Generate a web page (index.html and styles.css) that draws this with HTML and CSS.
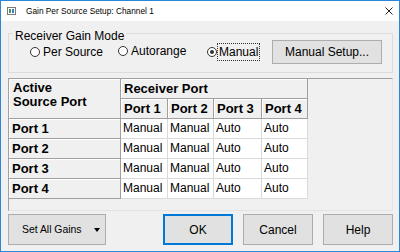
FILE: index.html
```html
<!DOCTYPE html>
<html lang="en">
<head>
    <meta charset="UTF-8">
    <title>Gain Per Source Setup: Channel 1</title>
    <link rel="stylesheet" href="styles.css">
</head>
<body>
    <div class="dialog">
        <div class="titlebar">
            <svg class="app-icon" width="9" height="8" viewBox="0 0 9 8">
                <rect x="0.5" y="0.5" width="8" height="7" fill="#fff" stroke="#7a7a7a"/>
                <rect x="2" y="2" width="2" height="4" fill="#3a9a5a"/>
                <rect x="5" y="2" width="2" height="4" fill="#3a7ac8"/>
            </svg>
            <span class="title">Gain Per Source Setup: Channel 1</span>
            <svg class="close" width="8" height="8" viewBox="0 0 8 8">
                <path d="M0.5 0.5 L7.5 7.5 M7.5 0.5 L0.5 7.5" stroke="#222" stroke-width="1"/>
            </svg>
        </div>
        <div class="body">
            <div class="groupbox">
                <div class="legend">Receiver Gain Mode</div>
                <div class="mode-row">
                    <div class="radio radio-source"><span class="dot"></span><span class="label">Per Source</span></div>
                    <div class="radio radio-auto"><span class="dot"></span><span class="label">Autorange</span></div>
                    <div class="radio radio-manual"><span class="dot checked"></span><span class="label focus">Manual</span></div>
                    <button class="btn btn-setup">Manual Setup...</button>
                </div>
            </div>

            <div class="table-frame">
                <div class="grid">
                    <div class="hcell corner">Active<br>Source Port</div>
                    <div class="hcell span-port">Receiver Port</div>
                    <div class="hcell">Port 1</div>
                    <div class="hcell">Port 2</div>
                    <div class="hcell">Port 3</div>
                    <div class="hcell">Port 4</div>

                    <div class="hcell">Port 1</div>
                    <div class="cell">Manual</div>
                    <div class="cell">Manual</div>
                    <div class="cell">Auto</div>
                    <div class="cell">Auto</div>

                    <div class="hcell">Port 2</div>
                    <div class="cell">Manual</div>
                    <div class="cell">Manual</div>
                    <div class="cell">Auto</div>
                    <div class="cell">Auto</div>

                    <div class="hcell">Port 3</div>
                    <div class="cell">Manual</div>
                    <div class="cell">Manual</div>
                    <div class="cell">Auto</div>
                    <div class="cell">Auto</div>

                    <div class="hcell">Port 4</div>
                    <div class="cell">Manual</div>
                    <div class="cell">Manual</div>
                    <div class="cell">Auto</div>
                    <div class="cell">Auto</div>
                </div>
            </div>

            <div class="button-row">
                <button class="btn btn-gains"><span>Set All Gains</span><span class="caret"></span></button>
                <button class="btn btn-default">OK</button>
                <button class="btn">Cancel</button>
                <button class="btn">Help</button>
            </div>
        </div>
    </div>
</body>
</html>
```

FILE: styles.css
```css
/* Dialog frame */
body {
    margin: 0;
    padding: 0;
    font-family: "Liberation Sans", Arial, sans-serif;
    font-size: 12px;
    color: #000;
    background: #fff;
}
.dialog {
    width: 400px;
    height: 252px;
    box-sizing: border-box;
    border: 1px solid #2b86d6;
    display: flex;
    flex-direction: column;
}
.titlebar {
    height: 20px;
    background: #fff;
    display: flex;
    align-items: center;
    padding: 0 6px;
}
.app-icon {
    display: block;
}
.title {
    margin-left: 10px;
    font-size: 8.3px;
    color: #000;
}
.close {
    display: block;
    margin-left: auto;
}
.body {
    flex: 1;
    background: #f0f0f0;
    padding: 12px 6px 6px 7px;
    display: flex;
    flex-direction: column;
}

/* Group box */
.groupbox {
    border: 1px solid #dcdcdc;
    display: flex;
    flex-direction: column;
    padding-bottom: 8px;
}
.legend {
    align-self: flex-start;
    margin: -5px 0 -4px 4px;
    padding: 0 2px;
    line-height: 14px;
    background: #f0f0f0;
}
.mode-row {
    display: flex;
    align-items: center;
    height: 24px;
    margin-top: 1px;
}
.radio {
    display: flex;
    align-items: center;
}
.radio-source {
    margin-left: 21px;
    width: 88px;
}
.radio-auto {
    width: 89px;
    margin-top: -2px;
}
.radio-manual {
    margin-top: -1px;
}
.dot {
    width: 10px;
    height: 10px;
    box-sizing: border-box;
    border: 1px solid #333;
    border-radius: 50%;
    background: #fff;
    display: flex;
    align-items: center;
    justify-content: center;
    margin-right: 3px;
}
.radio-manual .dot {
    margin-right: 1px;
}
.dot.checked::after {
    content: "";
    width: 4px;
    height: 4px;
    border-radius: 50%;
    background: #333;
}
.label {
    line-height: 14px;
}
.label.focus {
    outline: 1px dotted #333;
    outline-offset: 0;
    padding: 1px 1px;
}

/* Buttons */
.btn {
    font-family: "Liberation Sans", Arial, sans-serif;
    font-size: 12px;
    color: #000;
    background: #e1e1e1;
    border: 1px solid #adadad;
    padding: 0;
    margin: 0;
    box-sizing: border-box;
}
.btn-setup {
    margin-left: auto;
    margin-right: 10px;
    width: 110px;
    height: 24px;
}

/* Grid */
.table-frame {
    margin-top: 5px;
    height: 133px;
    box-sizing: border-box;
    border: 1px solid #a0a0a0;
    border-right-color: #e3e3e3;
    border-bottom-color: #e3e3e3;
    background: #f0f0f0;
}
.grid {
    display: grid;
    grid-template-columns: 112px 47px 46px 48px 46px;
    grid-template-rows: repeat(6, 20px);
}
.hcell,
.cell {
    box-sizing: border-box;
    display: flex;
    align-items: center;
    border-right: 1px solid #a0a0a0;
    border-bottom: 1px solid #a0a0a0;
}
.hcell {
    background: #f0f0f0;
    font-weight: bold;
    font-size: 13px;
    padding-left: 3px;
    box-shadow: inset 1px 1px 0 #fff;
}
.corner {
    grid-row: span 2;
    align-items: flex-start;
    padding: 2px 0 0 4px;
    line-height: 14px;
}
.span-port {
    grid-column: span 4;
}
.cell {
    background: #fff;
    border-color: #dadada;
    padding: 0 0 2px 2px;
}

/* Bottom buttons */
.button-row {
    margin-top: 3px;
    height: 31px;
    display: flex;
    gap: 10px;
}
.button-row .btn {
    width: 70px;
    height: 31px;
}
.button-row .btn-gains {
    width: 98px;
    margin-right: auto;
    font-size: 10.4px;
    display: flex;
    align-items: center;
    justify-content: space-between;
    padding: 0 5px 0 13px;
}
.caret {
    width: 0;
    height: 0;
    border-left: 3px solid transparent;
    border-right: 3px solid transparent;
    border-top: 4px solid #000;
}
.btn-default {
    border-color: #0078d7;
    box-shadow: inset 0 0 0 1px #0078d7;
}
```
